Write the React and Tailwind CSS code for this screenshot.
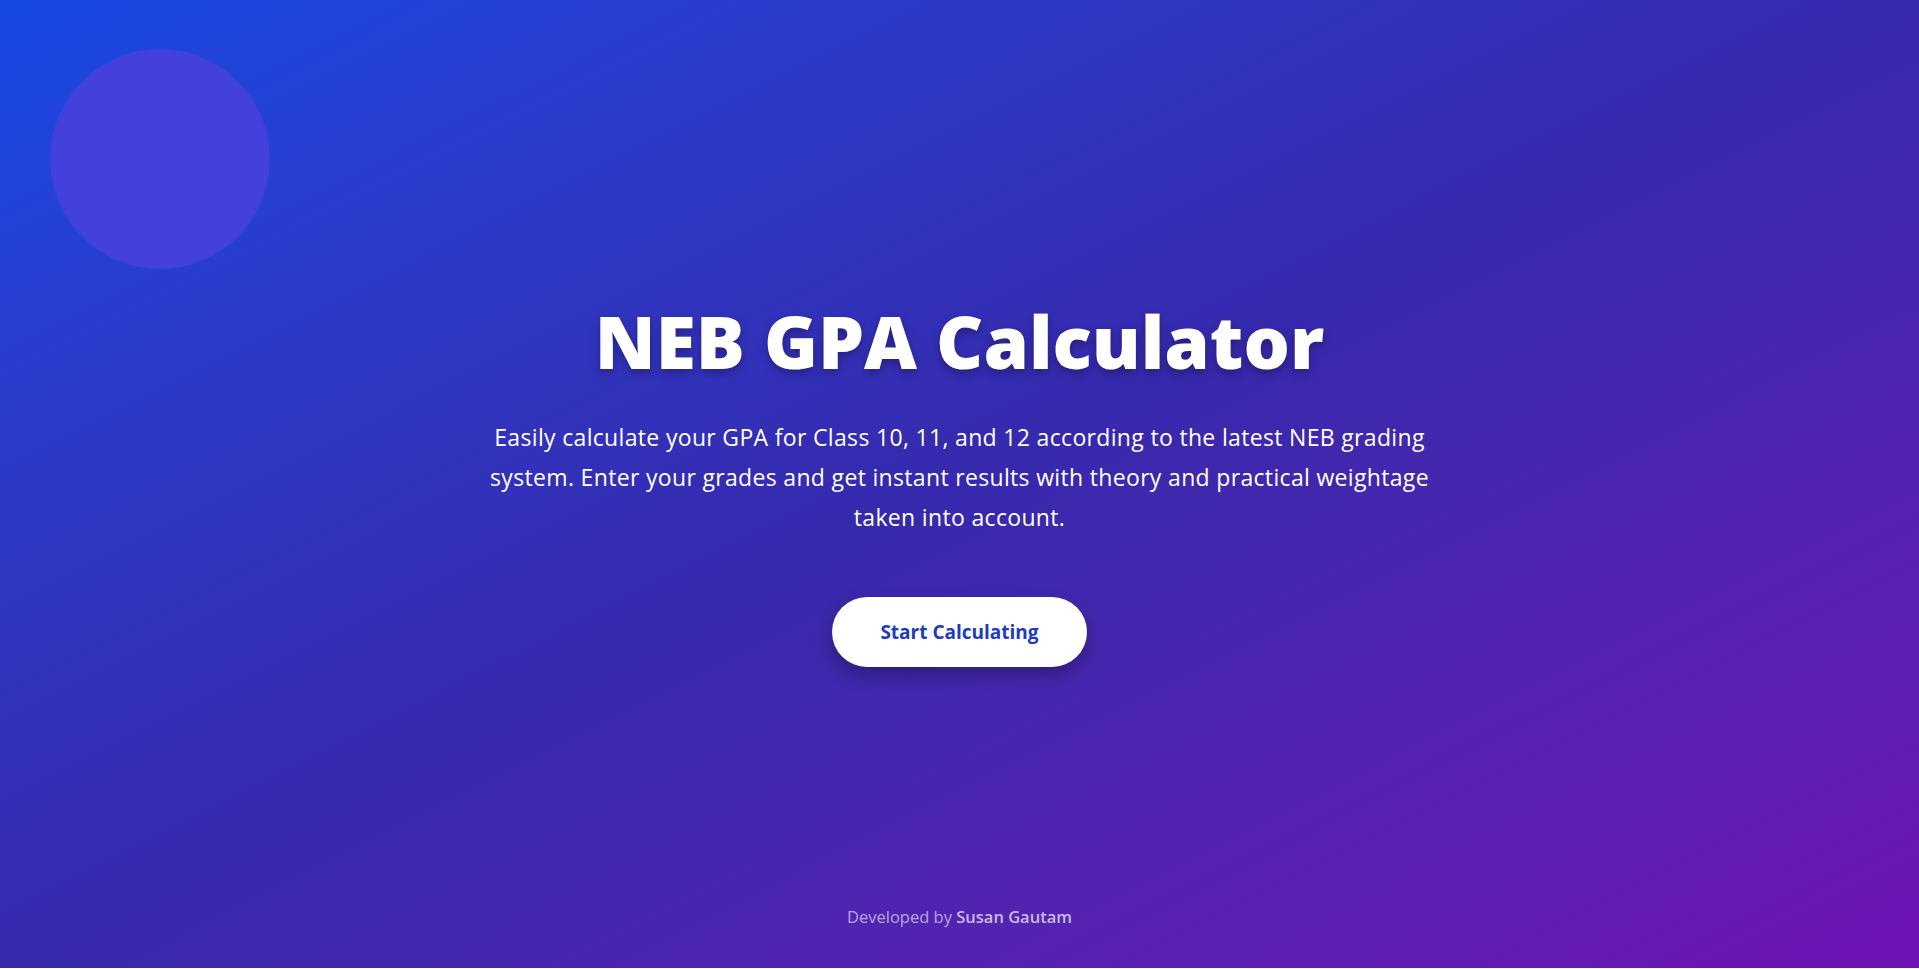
import React from "react";

export default function App() {
  return (
    <div className="w-full bg-[#111111]" style={{ fontFamily: "'Open Sans', 'Noto Sans', sans-serif" }}>
      <section className="relative h-[968px] w-full overflow-hidden bg-gradient-to-br from-[#1449e3] via-[#3629ad] to-[#6e12b4] flex flex-col">
        <div className="absolute left-[50px] top-[49px] w-[220px] h-[220px] rounded-full bg-[#4340dc] border border-[#2f4ae0]/60" />
        <div className="flex-1 flex flex-col items-center justify-center pt-[66px]">
          <h1 className="text-white font-extrabold text-[73px] leading-none [text-shadow:0_4px_10px_rgba(0,0,0,0.3)]">
            NEB GPA Calculator
          </h1>
          <p className="mt-[40px] max-w-[960px] text-center text-white text-[23px] tracking-[0.33px] leading-[40px]">
            Easily calculate your GPA for Class 10, 11, and 12 according to the latest NEB grading system. Enter your grades and get instant results with theory and practical weightage taken into account.
          </p>
          <button className="mt-[60px] h-[70px] w-[255px] rounded-full bg-white text-[#1d3bbf] font-bold text-[19px] shadow-[0_8px_18px_rgba(0,0,0,0.3)]">
            Start Calculating
          </button>
        </div>
        <footer className="pb-[38px] text-center text-[16.5px] text-white/60">
          Developed by <span className="font-semibold text-white/70">Susan Gautam</span>
        </footer>
      </section>
    </div>
  );
}
